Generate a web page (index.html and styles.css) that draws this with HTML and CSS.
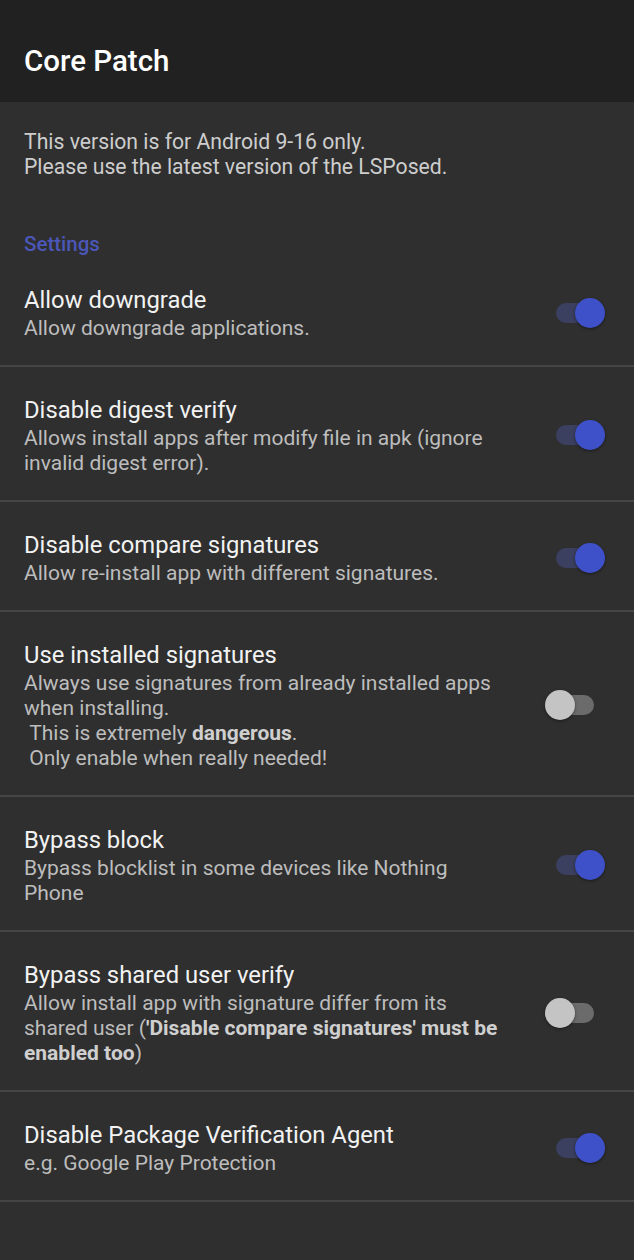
FILE: index.html
```html
<!DOCTYPE html>
<html lang="en">
<head>
<meta charset="utf-8">
<title>Core Patch</title>
<link rel="stylesheet" href="styles.css">
</head>
<body>
<header class="appbar"><h1 class="appbar-title">Core Patch</h1></header>
<main class="content">
  <p class="intro">This version is for Android 9-16 only.<br>Please use the latest version of the LSPosed.</p>
  <h2 class="category">Settings</h2>
  <ul class="prefs">
    <li class="pref">
      <div class="pref-text">
        <div class="pref-title">Allow downgrade</div>
        <div class="pref-summary">Allow downgrade applications.</div>
      </div>
      <div class="switch on"><span class="track"></span><span class="thumb"></span></div>
    </li>
    <li class="pref">
      <div class="pref-text">
        <div class="pref-title">Disable digest verify</div>
        <div class="pref-summary">Allows install apps after modify file in apk (ignore invalid digest error).</div>
      </div>
      <div class="switch on"><span class="track"></span><span class="thumb"></span></div>
    </li>
    <li class="pref">
      <div class="pref-text">
        <div class="pref-title">Disable compare signatures</div>
        <div class="pref-summary">Allow re-install app with different signatures.</div>
      </div>
      <div class="switch on"><span class="track"></span><span class="thumb"></span></div>
    </li>
    <li class="pref">
      <div class="pref-text">
        <div class="pref-title">Use installed signatures</div>
        <div class="pref-summary">Always use signatures from already installed apps when installing.<br>&nbsp;This is extremely <b>dangerous</b>.<br>&nbsp;Only enable when really needed!</div>
      </div>
      <div class="switch"><span class="track"></span><span class="thumb"></span></div>
    </li>
    <li class="pref">
      <div class="pref-text">
        <div class="pref-title">Bypass block</div>
        <div class="pref-summary">Bypass blocklist in some devices like Nothing Phone</div>
      </div>
      <div class="switch on"><span class="track"></span><span class="thumb"></span></div>
    </li>
    <li class="pref">
      <div class="pref-text">
        <div class="pref-title">Bypass shared user verify</div>
        <div class="pref-summary">Allow install app with signature differ from its shared user (<b>'Disable compare signatures' must be enabled too</b>)</div>
      </div>
      <div class="switch"><span class="track"></span><span class="thumb"></span></div>
    </li>
    <li class="pref">
      <div class="pref-text">
        <div class="pref-title">Disable Package Verification Agent</div>
        <div class="pref-summary">e.g. Google Play Protection</div>
      </div>
      <div class="switch on"><span class="track"></span><span class="thumb"></span></div>
    </li>
  </ul>
</main>
</body>
</html>
```
FILE: styles.css
```css
* { box-sizing: border-box; }
html, body { margin: 0; padding: 0; }
body {
  background: #2f2f2f;
  font-family: Roboto, "Noto Sans", "Liberation Sans", sans-serif;
  min-height: 1260px;
}
.appbar {
  background: #212121;
  height: 102px;
  display: flex;
  align-items: center;
  padding: 0 24px;
}
.appbar-title {
  margin: 0;
  margin-top: 20px;
  font-size: 29.5px;
  font-weight: 500;
  color: #ffffff;
}
.content { background: #2f2f2f; }
.intro {
  margin: 0;
  padding: 27px 24px 0;
  font-size: 21.2px;
  line-height: 25px;
  color: #cdcdcd;
}
.category {
  margin: 0;
  padding: 53px 24px 1px;
  font-size: 20.5px;
  line-height: 24px;
  font-weight: 500;
  color: #4b57b8;
}
.prefs { list-style: none; margin: 0; padding: 0; }
.pref {
  display: flex;
  align-items: center;
  border-bottom: 2px solid #454545;
  padding: 27px 0 24px 24px;
}
.pref-text { flex: 1; padding-right: 36px; }
.pref-title {
  font-size: 23.8px;
  line-height: 32px;
  color: #f2f2f2;
}
.pref-summary {
  font-size: 21px;
  line-height: 25px;
  color: #bdbdbd;
}
.pref-summary b { font-weight: 700; color: #cfcfcf; }
.switch {
  position: relative;
  flex: none;
  width: 60px;
  height: 30px;
  margin-right: 29px;
}
.track {
  position: absolute;
  left: 11px;
  top: 5px;
  width: 38px;
  height: 20px;
  border-radius: 10px;
  background: #6b6b6b;
}
.thumb {
  position: absolute;
  left: 0;
  top: 0;
  width: 30px;
  height: 30px;
  border-radius: 50%;
  background: #c4c4c4;
  box-shadow: 0 1px 3px rgba(0,0,0,0.45);
}
.switch.on .track { background: #3b3f60; }
.switch.on .thumb { left: 30px; background: #3f51c8; }
```
